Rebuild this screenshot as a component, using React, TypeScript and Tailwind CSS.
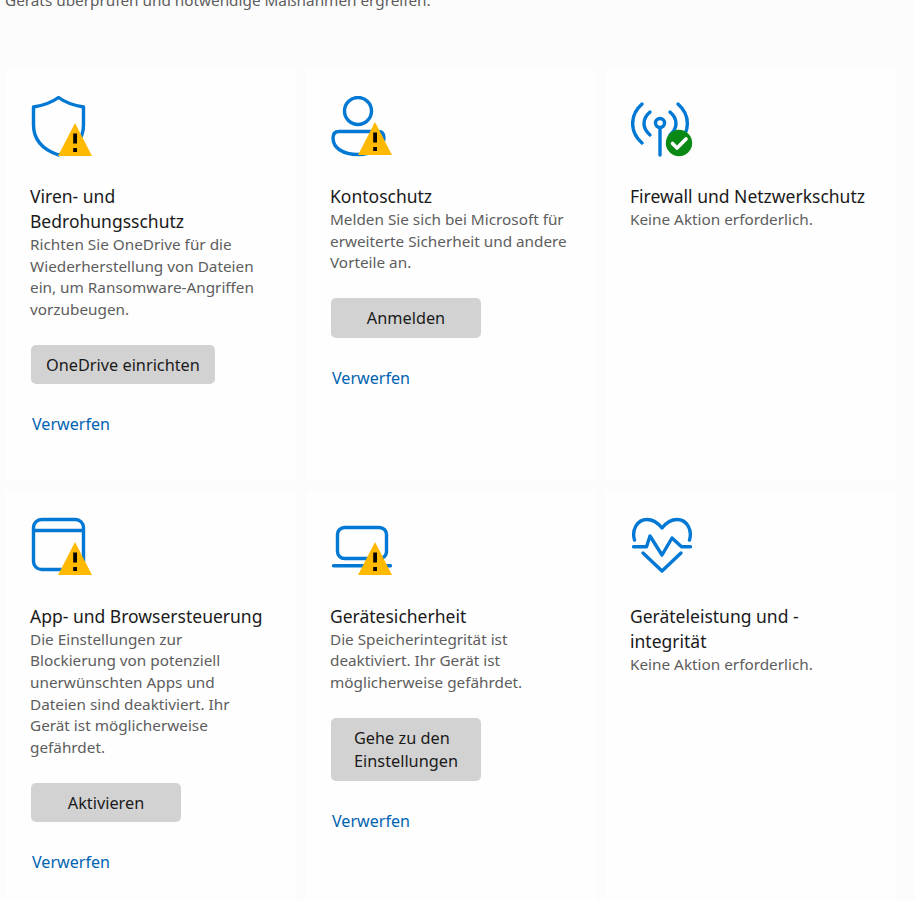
import type { ReactNode } from 'react';

const BLUE = '#0078d4';
const STROKE = 3.4;

// yellow triangle that sits on the lower right of most icons
function Warning({ y = 0 }: { y?: number }) {
  return (
    <g transform={`translate(0 ${y})`}>
      <path d="M27 60 L44 27 L61 60 Z" fill="#ffb900" />
      <rect x="42.2" y="37.5" width="3.8" height="10" fill="#000" />
      <rect x="42.2" y="52" width="3.8" height="4" fill="#000" />
    </g>
  );
}

function ShieldIcon() {
  return (
    <svg width="62" height="62" viewBox="0 0 62 62" fill="none">
      <path
        d="M27.5 1.5 C20 7 12 9.5 2.5 11 V29 C2.5 43 10 53 27.5 59 C44 53 52.5 43 52.5 29 V11 C43 9.5 35 7 27.5 1.5 Z"
        stroke={BLUE}
        strokeWidth={STROKE}
        strokeLinejoin="round"
      />
      <Warning />
    </svg>
  );
}

function PersonIcon() {
  return (
    <svg width="62" height="62" viewBox="0 0 62 62" fill="none">
      <circle cx="27" cy="15" r="13.5" stroke={BLUE} strokeWidth={STROKE} />
      <path
        d="M8 35.5 H47 C51 35.5 53 38 53 42 C53 50 41 58.5 27 58.5 C12 58.5 2 52 2 42 C2 38 4 35.5 8 35.5 Z"
        stroke={BLUE}
        strokeWidth={STROKE}
      />
      <Warning y={-1} />
    </svg>
  );
}

function SignalIcon() {
  return (
    <svg width="62" height="62" viewBox="0 0 62 62" fill="none">
      <g stroke={BLUE} strokeWidth={STROKE} strokeLinecap="round">
        <path d="M11 8 C-1.5 19 -1.5 36 11 47" />
        <path d="M19 16 C11 23 11 32 19 39" />
        <path d="M39 16 C47 23 47 32 39 39" />
        <path d="M47 8 C59.5 19 59.5 36 47 47" />
        <path d="M29 33 V59" />
      </g>
      <circle cx="29" cy="27" r="4.5" stroke={BLUE} strokeWidth={STROKE} />
      <circle cx="48" cy="47" r="13.2" fill="#0a8a14" />
      <path
        d="M41.5 47.5 L46 52 L55 43"
        stroke="#fff"
        strokeWidth="3.6"
        strokeLinecap="round"
        strokeLinejoin="round"
      />
    </svg>
  );
}

function WindowIcon() {
  return (
    <svg width="62" height="62" viewBox="0 0 62 62" fill="none">
      <rect x="2.5" y="3.5" width="50" height="50" rx="8" stroke={BLUE} strokeWidth={STROKE} />
      <path d="M2.5 14.5 H52.5" stroke={BLUE} strokeWidth={STROKE} />
      <Warning y={-1} />
    </svg>
  );
}

function LaptopIcon() {
  return (
    <svg width="62" height="62" viewBox="0 0 62 62" fill="none">
      <rect x="6.5" y="11.5" width="49" height="31" rx="7" stroke={BLUE} strokeWidth={STROKE} />
      <path d="M2.5 49.7 H59.5" stroke={BLUE} strokeWidth={STROKE} strokeLinecap="round" />
      <Warning y={-1} />
    </svg>
  );
}

function HeartIcon() {
  return (
    <svg width="62" height="62" viewBox="0 0 62 62" fill="none">
      <g stroke={BLUE} strokeWidth={STROKE} strokeLinecap="round" strokeLinejoin="round">
        <path d="M3.5 24 C0.5 14 6 3.5 16 3.5 C22 3.5 27 7 31 12 C35 7 40 3.5 46 3.5 C56 3.5 61.5 14 58.5 24" />
        <path d="M2.5 30.7 H15.5 L19 20 L31 39 L41 22 L50.5 30.7 H59.5" />
        <path d="M12 37 L31 55 L50 37" />
      </g>
    </svg>
  );
}

type CardData = {
  icon: ReactNode;
  title: string;
  body: string;
  button?: string;
  dismiss?: boolean;
};

const cards: CardData[] = [
  {
    icon: <ShieldIcon />,
    title: 'Viren- und\nBedrohungsschutz',
    body: 'Richten Sie OneDrive für die Wiederherstellung von Dateien ein, um Ransomware-Angriffen vorzubeugen.',
    button: 'OneDrive einrichten',
    dismiss: true,
  },
  {
    icon: <PersonIcon />,
    title: 'Kontoschutz',
    body: 'Melden Sie sich bei Microsoft für erweiterte Sicherheit und andere Vorteile an.',
    button: 'Anmelden',
    dismiss: true,
  },
  {
    icon: <SignalIcon />,
    title: 'Firewall und Netzwerkschutz',
    body: 'Keine Aktion erforderlich.',
  },
  {
    icon: <WindowIcon />,
    title: 'App- und Browsersteuerung',
    body: 'Die Einstellungen zur Blockierung von potenziell unerwünschten Apps und Dateien sind deaktiviert. Ihr Gerät ist möglicherweise gefährdet.',
    button: 'Aktivieren',
    dismiss: true,
  },
  {
    icon: <LaptopIcon />,
    title: 'Gerätesicherheit',
    body: 'Die Speicherintegrität ist deaktiviert. Ihr Gerät ist möglicherweise gefährdet.',
    button: 'Gehe zu den\nEinstellungen',
    dismiss: true,
  },
  {
    icon: <HeartIcon />,
    title: 'Geräteleistung und -\nintegrität',
    body: 'Keine Aktion erforderlich.',
  },
];

function Card({ card }: { card: CardData }) {
  return (
    <div className="bg-[#fefefe] pl-[25px] pt-[26px]">
      <div className="h-[62px]">{card.icon}</div>
      <h3 className="-ml-px mt-[26px] whitespace-pre text-[17.5px] leading-[25px] text-[#1a1a1a]">{card.title}</h3>
      <p className="-ml-px w-[240px] text-[15.3px] leading-[21.67px] text-[#5d5d5d]">{card.body}</p>
      {card.button && (
        <button className="mt-[24px] block min-w-[150px] rounded-[5px] bg-[#d2d2d2] px-[15px] pb-[7px] pt-[9px] text-center text-[16.3px] leading-[23.5px] text-[#1a1a1a]">
          <span className="inline-block whitespace-pre text-left">{card.button}</span>
        </button>
      )}
      {card.dismiss && (
        <div className="ml-px mt-[28px] text-[16.1px] leading-[24px] text-[#0063b1]">Verwerfen</div>
      )}
    </div>
  );
}

export default function App() {
  return (
    <div className="h-[900px] overflow-hidden bg-[#fcfcfc] font-['Noto_Sans','Open_Sans',sans-serif]">
      <div className="h-[70px] overflow-hidden">
        <p className="-mt-[10px] pl-[5px] text-[15.3px] leading-[21px] text-[#5d5d5d]">
          Geräts überprüfen und notwendige Maßnahmen ergreifen.
        </p>
      </div>
      <div className="grid grid-cols-[290px_290px_290px] grid-rows-[409.5px_410px] gap-[10px] pl-[6px]">
        {cards.map((card) => (
          <Card key={card.title} card={card} />
        ))}
      </div>
    </div>
  );
}
